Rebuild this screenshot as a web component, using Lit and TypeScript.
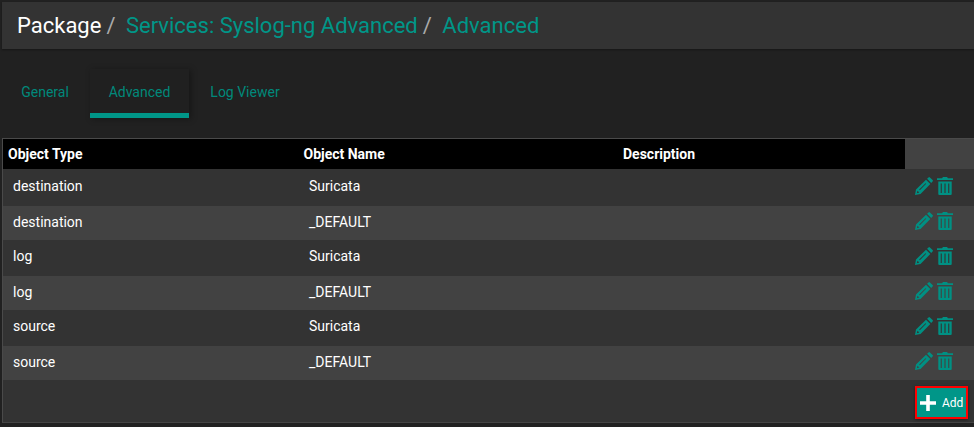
import { LitElement, html, css, svg } from "lit";
import { customElement } from "lit/decorators.js";

const rows = [
  ["destination", "Suricata"],
  ["destination", "_DEFAULT"],
  ["log", "Suricata"],
  ["log", "_DEFAULT"],
  ["source", "Suricata"],
  ["source", "_DEFAULT"],
];

const pencil = svg`<svg class="ic" viewBox="0 0 18 18" width="18" height="18"><path fill="currentColor" fill-rule="evenodd" d="M14.900.400 17.600 3.100a1 1 0 0 1 0 1.400L16.200 5.900 12.100 1.800 13.500.400a1 1 0 0 1 1.400 0ZM11 2.700 15.300 7 5.500 17 0 18 1 12.500ZM2.500 13.700 1.800 16.200 4.300 15.500ZM4.200 12.600 10.600 6.200 11.200 6.800 4.800 13.200Z"/></svg>`;
const trash = svg`<svg class="ic" viewBox="0 0 16 18" width="16" height="18"><path fill="currentColor" fill-rule="evenodd" d="M5 1.300 6 0h4l1 1.300h5V3H0V1.300ZM1.300 4.500H14.700V17a1 1 0 0 1-1 1H2.300a1 1 0 0 1-1-1ZM3.700 6.500V16H4.800V6.500ZM7.450 6.500V16H8.550V6.500ZM11.200 6.500V16H12.300V6.500Z"/></svg>`;

@customElement("app-root")
export class AppRoot extends LitElement {
  static styles = css`
    :host { display: block; width: 974px; height: 427px; background: #212121; overflow: hidden; font-family: Roboto, "Liberation Sans", sans-serif; color: #fff; }
    .page { padding: 2px 0 0 2px; display: flex; flex-direction: column; }
    .crumbs { height: 47px; background: #333; box-shadow: 0 1px 2px rgba(0,0,0,.35); display: flex; align-items: center; padding: 0 0 0 15px; font-size: 22px; box-sizing: border-box; }
    .crumbs .sep { color: #aaa; margin: 0 10.5px 0 5px; }
    .crumbs .link { color: #009688; }
    .tabs { display: flex; height: 49px; margin-top: 20px; }
    .tab { color: #00897b; font-size: 14px; display: flex; align-items: center; justify-content: center; height: 49px; box-sizing: border-box; padding-bottom: 3px; }
    .tab.gen { width: 88px; padding-right: 2px; }
    .tab.adv { width: 99px; background: #202020; border-bottom: 5px solid #009688; padding: 2px 0 0; box-shadow: 2px 1px 6px rgba(0,0,0,.35); }
    .tab.log { width: 112px; }
    .panel { margin-top: 20px; width: 972px; height: 285px; box-sizing: border-box; background: #333; border: 1px solid #4a4a4a; border-right: none; border-bottom: 1px solid #444; display: flex; flex-direction: column; }
    .thead { display: grid; grid-template-columns: 902px 1fr; height: 30px; background: #424242; }
    .thead .cols { background: #000; display: grid; grid-template-columns: 295.5px 319.5px 1fr; align-items: center; padding-left: 5px; font-weight: 700; font-size: 14px; }
    .row { display: grid; grid-template-columns: 296px 1fr auto; align-items: center; padding: 0 0 4px 10px; box-sizing: border-box; height: 36px; font-size: 14px; color: #fff; background: #333; }
    .row.first { height: 37px; padding-bottom: 3px; }
    .row.alt { height: 34px; padding-bottom: 3px; background: #424242; }
    .acts { display: flex; align-items: center; gap: 4px; color: #009083; padding-right: 21px; }
    .row.alt .acts { padding-bottom: 1px; }
    .ic { display: block; }
    .foot { display: flex; justify-content: flex-end; padding: 6px 6px 0 0; }
    .add { width: 53px; height: 33px; box-sizing: border-box; background: #009688; border: 2px solid #f00; color: #fff; font: 400 12px Roboto, sans-serif; display: flex; align-items: center; gap: 6px; padding: 0 0 0 3px; box-shadow: 0 1px 3px rgba(0,0,0,.4); }
    .plus { flex: none; }
  `;

  render() {
    return html`<div class="page">
      <div class="crumbs">
        <span>Package</span><span class="sep">/</span>
        <span class="link">Services: Syslog-ng Advanced</span><span class="sep">/</span>
        <span class="link">Advanced</span>
      </div>
      <div class="tabs">
        <div class="tab gen">General</div>
        <div class="tab adv">Advanced</div>
        <div class="tab log">Log Viewer</div>
      </div>
      <div class="panel">
        <div class="thead">
          <div class="cols"><span>Object Type</span><span>Object Name</span><span>Description</span></div>
          <div></div>
        </div>
        ${rows.map((r, i) => html`<div class="row ${i % 2 ? "alt" : ""} ${i === 0 ? "first" : ""}">
          <span>${r[0]}</span><span>${r[1]}</span>
          <span class="acts">${pencil}${trash}</span>
        </div>`)}
        <div class="foot">
          <div class="add">
            <svg class="plus" viewBox="0 0 16 16" width="16" height="16"><path fill="#fff" d="M6.200 0h3.600v6.200h6.200v3.600h-6.200v6.200H6.200V9.800H0V6.200h6.200Z"/></svg>
            <span>Add</span>
          </div>
        </div>
      </div>
    </div>`;
  }
}
